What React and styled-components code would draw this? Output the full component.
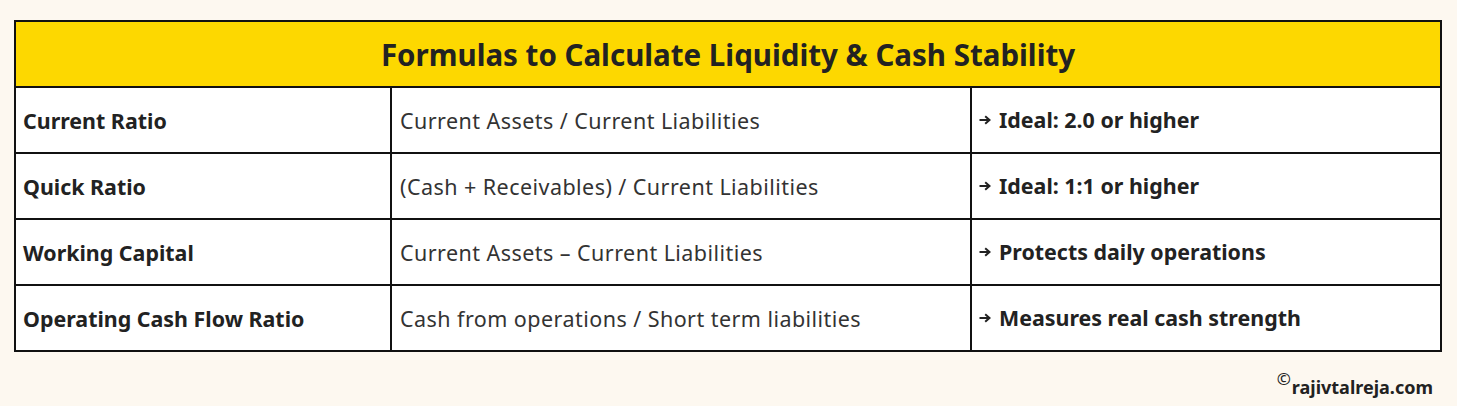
import React from "react";
import styled, { createGlobalStyle } from "styled-components";

const rows = [
  ["Current Ratio", "Current Assets / Current Liabilities", "Ideal: 2.0 or higher"],
  ["Quick Ratio", "(Cash + Receivables) / Current Liabilities", "Ideal: 1:1 or higher"],
  ["Working Capital", "Current Assets \u2013 Current Liabilities", "Protects daily operations"],
  ["Operating Cash Flow Ratio", "Cash from operations / Short term liabilities", "Measures real cash strength"],
];

const GlobalStyle = createGlobalStyle`
  html, body {
    margin: 0;
    padding: 0;
    background: #fdf8f0;
    font-family: "Noto Sans", "Open Sans", sans-serif;
    color: #1f1f1f;
  }
`;

const Page = styled.div`
  width: 1457px;
  height: 406px;
  padding: 20px 17px 0 14px;
  box-sizing: border-box;
  display: flex;
  flex-direction: column;
`;

const Table = styled.table`
  width: 1426px;
  border-collapse: collapse;
  table-layout: fixed;
  border: 2px solid #111;
`;

const HeaderCell = styled.th`
  background: #fdd800;
  height: 64px;
  padding: 0;
  border: 2px solid #111;
  font-size: 29.5px;
  font-weight: 700;
  color: #222;
  text-align: center;
`;

const Cell = styled.td`
  background: #ffffff;
  height: 64px;
  padding: 0 0 0 ${(p) => (p.$bold ? 7 : 8)}px;
  border: 2px solid #111;
  font-size: ${(p) => (p.$bold ? 21.4 : 21.5)}px;
  font-weight: ${(p) => (p.$bold ? 700 : 400)};
  letter-spacing: ${(p) => (p.$bold ? 0 : 0.45)}px;
  color: ${(p) => (p.$bold ? "#222" : "#333")};
  white-space: nowrap;
  vertical-align: middle;
`;

const Note = styled.span`
  display: inline-flex;
  align-items: center;
  gap: 8px;
  position: relative;
  top: -2px;
`;

const Arrow = () => (
  <svg width="12" height="10" viewBox="0 0 12 10">
    <path d="M0.5 5 H9" stroke="#222" strokeWidth="2" />
    <path d="M6.2 1.3 L10.5 5 L6.2 8.7" fill="none" stroke="#222" strokeWidth="2" />
  </svg>
);

const Footer = styled.div`
  display: flex;
  justify-content: flex-end;
  align-items: flex-end;
  padding: 23px 7px 0 0;
  font-size: 18px;
  font-weight: 700;
  color: #222;
`;

const Copy = styled.span`
  font-size: 17px;
  font-weight: 400;
  position: relative;
  top: -9px;
  margin-right: 1px;
`;

export default function App() {
  return (
    <Page>
      <GlobalStyle />
      <Table>
        <colgroup>
          <col style={{ width: 376 }} />
          <col style={{ width: 580 }} />
          <col style={{ width: 470 }} />
        </colgroup>
        <thead>
          <tr>
            <HeaderCell colSpan={3}>Formulas to Calculate Liquidity &amp; Cash Stability</HeaderCell>
          </tr>
        </thead>
        <tbody>
          {rows.map(([name, formula, note]) => (
            <tr key={name}>
              <Cell $bold>{name}</Cell>
              <Cell>{formula}</Cell>
              <Cell $bold>
                <Note>
                  <Arrow />
                  {note}
                </Note>
              </Cell>
            </tr>
          ))}
        </tbody>
      </Table>
      <Footer>
        <Copy>©</Copy>
        rajivtalreja.com
      </Footer>
    </Page>
  );
}
